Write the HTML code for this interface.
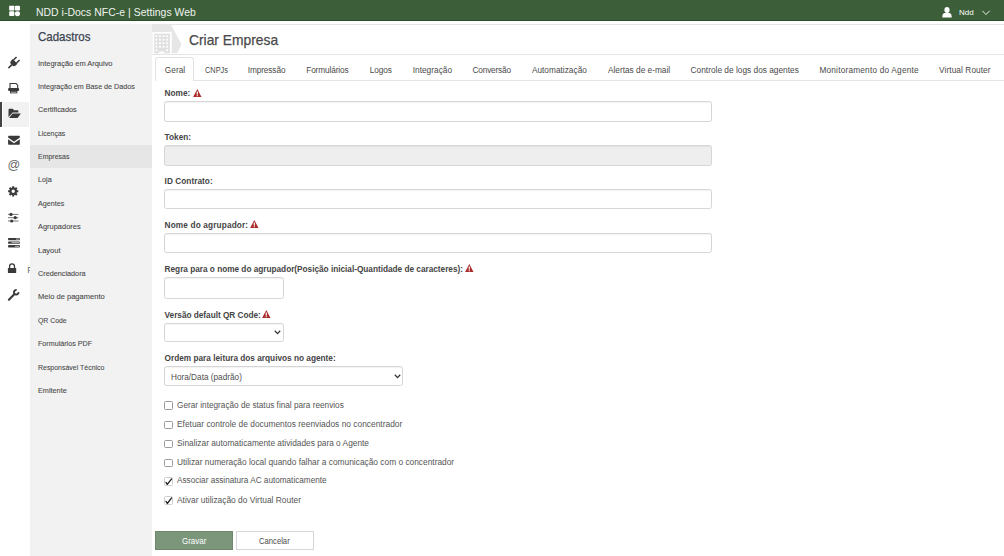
<!DOCTYPE html>
<html><head><meta charset="utf-8">
<style>
*{box-sizing:border-box;margin:0;padding:0}
html,body{width:1004px;height:556px;overflow:hidden;background:#fff;font-family:"Liberation Sans",sans-serif;color:#444}
.a{position:absolute;white-space:nowrap;line-height:1}
#top{position:absolute;left:0;top:0;width:1004px;height:21px;background:#3c5f39;border-bottom:1px solid #2b4d2a}
#ttl{left:36px;top:7.8px;font-size:10.4px;color:#f0f4f0}
#icol{position:absolute;left:0;top:21px;width:29.5px;height:535px;background:#fff}
#side{position:absolute;left:29.5px;top:24px;width:122.6px;height:532px;background:#f2f2f2}
.si{left:38px;font-size:8.1px;color:#484848;transform-origin:0 0;-webkit-text-stroke:0.1px #484848}
#act{position:absolute;left:29.5px;top:144.8px;width:122.6px;height:23.1px;background:#e6e6e6}
#cad{left:38px;top:31px;font-size:12.2px;color:#3b4450;-webkit-text-stroke:0.25px #3b4450;transform:scaleX(0.9446);transform-origin:0 0}
.hl{position:absolute;background:#e5e5e5;height:1px}
#crt{left:188.8px;top:32.6px;font-size:14.4px;color:#4a4a4a;-webkit-text-stroke:0.25px #4a4a4a;transform:scaleX(0.9602);transform-origin:0 0}
.tab{top:66.4px;font-size:8.3px;color:#4a4a4a}
.lb{left:164.6px;font-size:8.25px;font-weight:bold;color:#444}
.inp{position:absolute;left:164px;width:547.8px;height:20.5px;border:1px solid #d6d6d6;border-radius:2.5px;background:#fff;box-shadow:inset 0 1px 1px rgba(0,0,0,.05)}
.cb{position:absolute;left:164.2px;width:8.8px;height:8.8px;border:1.1px solid #9a9a9a;border-radius:1.5px;background:#fff}
.cbl{left:176.7px;font-size:8.9px;color:#555;transform-origin:0 0}
.btn{position:absolute;top:530.6px;height:19.5px;font-size:7.9px;text-align:center;line-height:19.5px}
</style></head><body>
<div id="top"></div>
<svg class="a" style="left:8px;top:5px" width="14" height="13" viewBox="0 0 14 13"><g fill="#fff"><rect x="1.2" y="0.7" width="5.1" height="4.7" rx="0.5"/><rect x="6.9" y="0.7" width="5.1" height="4.7" rx="1"/><rect x="1.2" y="6.3" width="5.1" height="4.8" rx="1.2"/><ellipse cx="9.45" cy="8.7" rx="2.6" ry="2.45"/></g></svg>
<div style="letter-spacing:0.05px" id="ttl" class="a">NDD i-Docs NFC-e | Settings Web</div>
<svg class="a" style="left:942px;top:6.5px" width="10" height="11" viewBox="0 0 10 11"><g fill="#fff"><ellipse cx="5" cy="3" rx="2.6" ry="3"/><path d="M0.3 10.5 C0.3 7 1.5 6 3 6 L7 6 C8.5 6 9.7 7 9.7 10.5 Z"/></g></svg>
<div class="a" style="left:959px;top:8.5px;font-size:8px;color:#fff">Ndd</div>
<svg class="a" style="left:981.8px;top:10.3px" width="9" height="6" viewBox="0 0 9 6"><path d="M0.3 0.8 L4 4.5 L7.7 0.8" stroke="#fff" stroke-width="0.9" fill="none"/></svg>

<div id="icol"></div>
<div class="a" style="left:27.2px;top:265.6px;font-size:8.4px;color:#666">F</div>
<div id="side"></div>
<div style="position:absolute;left:3px;top:101.6px;width:25.5px;height:25.2px;background:#f2f2f2"></div>
<div style="position:absolute;left:0;top:101.6px;width:2px;height:25.2px;background:#444"></div>
<svg class="a" style="left:0;top:0" width="30" height="320" viewBox="0 0 30 320">
<g fill="#3a3a3a" stroke="none">
<!-- plug -->
<g transform="translate(13.9,62.6) rotate(45)"><path d="M-3.3 -1.7 H3.3 V0.4 A2.8 2.8 0 0 1 0.5 3.2 H-0.5 A2.8 2.8 0 0 1 -3.3 0.4 Z"/><rect x="-2.9" y="-5.9" width="1.5" height="4.4"/><rect x="1.4" y="-5.9" width="1.5" height="4.4"/><rect x="-0.8" y="2.8" width="1.6" height="5" rx="0.7"/></g>
<!-- printer -->
<path d="M10 88.3 V83.5 H16 L17.7 85.2 V88.3" fill="none" stroke="#3a3a3a" stroke-width="1.1"/>
<rect x="8.1" y="88" width="11" height="3" rx="1.1"/>
<rect x="10.5" y="91.4" width="6.4" height="1.5" fill="#fff" stroke="#3a3a3a" stroke-width="0.9"/>
<!-- folder open -->
<path d="M8.5 117.3 V109.8 Q8.5 108.8 9.5 108.8 H12.8 L14 110.3 H17.6 Q18.4 110.3 18.4 111.2 V112.6 H12.6 Z"/>
<path d="M9.2 118.1 L12.6 113.4 H20.9 L17.6 118.1 Z"/>
<!-- envelope -->
<path d="M8.1 136.6 Q8.1 135.8 8.9 135.8 H19 Q19.8 135.8 19.8 136.6 V137.6 L14 141.8 L8.1 137.6 Z"/>
<path d="M8.1 139.2 L14 143.3 L19.8 139.2 V143.9 Q19.8 144.7 19 144.7 H8.9 Q8.1 144.7 8.1 143.9 Z"/>
<!-- gear -->
<path fill-rule="evenodd" d="M18.30 190.27 L18.30 192.33 L16.96 192.35 L16.60 193.21 L17.53 194.17 L16.07 195.63 L15.11 194.70 L14.25 195.06 L14.23 196.40 L12.17 196.40 L12.15 195.06 L11.29 194.70 L10.33 195.63 L8.87 194.17 L9.80 193.21 L9.44 192.35 L8.10 192.33 L8.10 190.27 L9.44 190.25 L9.80 189.39 L8.87 188.43 L10.33 186.97 L11.29 187.90 L12.15 187.54 L12.17 186.20 L14.23 186.20 L14.25 187.54 L15.11 187.90 L16.07 186.97 L17.53 188.43 L16.60 189.39 L16.96 190.25 Z M14.9 191.3 A1.7 1.7 0 1 0 11.5 191.3 A1.7 1.7 0 1 0 14.9 191.3 Z"/>
<!-- sliders -->
<g stroke="#666" stroke-width="0.9"><path d="M8 214.4 H18.4 M8 217.7 H18.4 M8 221 H18.4"/></g>
<circle cx="11" cy="214.4" r="1.6"/><circle cx="15.2" cy="217.7" r="1.6"/><circle cx="11.7" cy="221" r="1.6"/>
<!-- server bars -->
<rect x="8.1" y="237.9" width="11.7" height="2.3" rx="0.4"/>
<rect x="8.1" y="241.5" width="11.7" height="2.3" rx="0.4"/>
<rect x="8.1" y="245.1" width="11.7" height="2.3" rx="0.4"/>
<g fill="#c8c8c8"><rect x="16" y="238.6" width="3" height="0.9"/><rect x="11.6" y="242.2" width="7.4" height="0.9"/><rect x="15" y="245.8" width="4" height="0.9"/></g>
<!-- lock -->
<path d="M9.6 268.3 V266.4 A2.45 2.45 0 0 1 14.5 266.4 V268.3" fill="none" stroke="#3a3a3a" stroke-width="1.3"/>
<rect x="7.9" y="268" width="8.3" height="5" rx="0.6"/>
<!-- wrench -->
<path d="M8.9 299.7 L14.3 294.3" stroke="#3a3a3a" stroke-width="2.1" stroke-linecap="round"/>
<path d="M18.5 292.1 A2.3 2.3 0 1 1 16.6 290" fill="none" stroke="#3a3a3a" stroke-width="1.9"/>
</g>
</svg>
<div class="a" style="left:7.6px;top:158.6px;font-size:12.5px;color:#666">@</div>

<div id="act"></div>
<div id="cad" class="a">Cadastros</div>
<div style="top:59.50px;transform:scaleX(0.9198)" class="a si">Integração em Arquivo</div>
<div style="top:82.89px;transform:scaleX(0.8853)" class="a si">Integração em Base de Dados</div>
<div style="top:106.28px;transform:scaleX(0.907)" class="a si">Certificados</div>
<div style="top:129.67px;transform:scaleX(0.85)" class="a si">Licenças</div>
<div style="top:153.06px;transform:scaleX(0.8611)" class="a si">Empresas</div>
<div style="top:176.45px;transform:scaleX(0.8933)" class="a si">Loja</div>
<div style="top:199.84px;transform:scaleX(0.8833)" class="a si">Agentes</div>
<div style="top:223.23px;transform:scaleX(0.9196)" class="a si">Agrupadores</div>
<div style="top:246.62px;transform:scaleX(0.925)" class="a si">Layout</div>
<div style="top:270.01px;transform:scaleX(0.8962)" class="a si">Credenciadora</div>
<div style="top:293.40px;transform:scaleX(0.9324)" class="a si">Meio de pagamento</div>
<div style="top:316.79px;transform:scaleX(0.8471)" class="a si">QR Code</div>
<div style="top:340.18px;transform:scaleX(0.8836)" class="a si">Formulários PDF</div>
<div style="top:363.57px;transform:scaleX(0.8597)" class="a si">Responsável Técnico</div>
<div style="top:386.96px;transform:scaleX(0.9)" class="a si">Emitente</div>

<!-- header -->
<div class="hl" style="left:152px;top:24px;width:852px"></div>
<div class="hl" style="left:152px;top:53.6px;width:852px"></div>
<svg class="a" style="left:152.3px;top:24.3px" width="31" height="30" viewBox="0 0 31 30"><path d="M0 0 L18.7 0 L29.5 20.5 L25.2 29.2 L0 29.2 Z" fill="#e6e6e6"/>
<rect x="0.4" y="7.9" width="19.3" height="21.3" fill="#fff"/>
<rect x="2.2" y="9.7" width="15.7" height="19.5" fill="#e0e0e0"/>
<g fill="#fff"><rect x="3.5" y="11.2" width="1.9" height="1.9"/><rect x="7" y="11.2" width="1.9" height="1.9"/><rect x="10.6" y="11.2" width="1.9" height="1.9"/><rect x="14.2" y="11.2" width="1.9" height="1.9"/>
<rect x="3.5" y="14.7" width="1.9" height="1.9"/><rect x="7" y="14.7" width="1.9" height="1.9"/><rect x="10.6" y="14.7" width="1.9" height="1.9"/><rect x="14.2" y="14.7" width="1.9" height="1.9"/>
<rect x="3.5" y="18.3" width="1.9" height="1.9"/><rect x="7" y="18.3" width="1.9" height="1.9"/><rect x="10.6" y="18.3" width="1.9" height="1.9"/><rect x="14.2" y="18.3" width="1.9" height="1.9"/>
<rect x="3.5" y="21.8" width="1.9" height="1.9"/><rect x="7" y="21.8" width="1.9" height="1.9"/><rect x="10.6" y="21.8" width="1.9" height="1.9"/><rect x="14.2" y="21.8" width="1.9" height="1.9"/>
<rect x="3.5" y="25.3" width="1.9" height="1.9"/><rect x="14.2" y="25.3" width="1.9" height="1.9"/><rect x="7" y="27.5" width="5.5" height="1.7"/></g></svg>
<div id="crt" class="a">Criar Empresa</div>

<!-- tabs -->
<div class="hl" style="left:155px;top:80px;width:849px"></div>
<div style="position:absolute;left:155.2px;top:57px;width:38.6px;height:24px;border:1px solid #e3e3e3;border-bottom:none;border-radius:3px 3px 0 0;background:#fff"></div>
<div style="left:164.8px;letter-spacing:0.025px" class="a tab">Geral</div>
<div style="left:204.7px;transform:scaleX(0.89);transform-origin:0 0" class="a tab">CNPJs</div>
<div style="left:247.7px;letter-spacing:-0.112px" class="a tab">Impressão</div>
<div style="left:306.2px;letter-spacing:-0.13px" class="a tab">Formulários</div>
<div style="left:369.7px;letter-spacing:-0.075px" class="a tab">Logos</div>
<div style="left:412.7px;letter-spacing:0.022px" class="a tab">Integração</div>
<div style="left:472.5px;letter-spacing:-0.188px" class="a tab">Conversão</div>
<div style="left:531.9px;letter-spacing:0.008px" class="a tab">Automatização</div>
<div style="left:607.9px;letter-spacing:0.0px" class="a tab">Alertas de e-mail</div>
<div style="left:690.6px;letter-spacing:0.011px" class="a tab">Controle de logs dos agentes</div>
<div style="left:819.4px;letter-spacing:0.191px" class="a tab">Monitoramento do Agente</div>
<div style="left:939.1px;letter-spacing:0.069px" class="a tab">Virtual Router</div>

<!-- form -->
<div class="a lb" style="top:90.2px">Nome:</div>
<div class="inp" style="top:101.1px"></div>
<div class="a lb" style="top:133.7px">Token:</div>
<div class="inp" style="top:145.1px;background:#eee"></div>
<div style="top:178.3px;letter-spacing:0.036px" class="a lb">ID Contrato:</div>
<div class="inp" style="top:188.9px"></div>
<div style="top:222.3px;letter-spacing:0.141px" class="a lb">Nome do agrupador:</div>
<div class="inp" style="top:232.9px"></div>
<div style="top:266.0px;letter-spacing:-0.014px" class="a lb">Regra para o nome do agrupador(Posição inicial-Quantidade de caracteres):</div>
<div class="inp" style="top:276.8px;width:119.7px;height:22.7px"></div>
<div style="top:311.5px;letter-spacing:-0.023px" class="a lb">Versão default QR Code:</div>
<div class="inp" style="top:322.8px;width:119.7px;height:19.6px"></div>
<div style="top:355.0px;letter-spacing:0.002px" class="a lb">Ordem para leitura dos arquivos no agente:</div>
<div class="inp" style="top:366.1px;width:238.9px;height:19.8px"></div>
<div style="left:171px;top:372.9px;font-size:8.7px;color:#505050;transform:scaleX(0.947);transform-origin:0 0" class="a">Hora/Data (padrão)</div>
<svg class="a" style="left:274.3px;top:330.1px" width="7" height="5" viewBox="0 0 7 5"><path d="M0.8 0.8 L3.5 3.6 L6.2 0.8" stroke="#333" stroke-width="1.3" fill="none"/></svg>
<svg class="a" style="left:393.5px;top:373.5px" width="7" height="5" viewBox="0 0 7 5"><path d="M0.8 0.8 L3.5 3.6 L6.2 0.8" stroke="#333" stroke-width="1.3" fill="none"/></svg>

<!-- warnings -->
<svg class="a" style="left:193px;top:88.8px" width="9" height="8" viewBox="0 0 9 8"><path d="M4.3 0.1 L8.5 7.9 L0.1 7.9 Z" fill="#ab2d2a"/><rect x="3.7" y="2.5" width="1.2" height="3.1" fill="#fff"/><rect x="3.7" y="6.2" width="1.2" height="1" fill="#fff"/></svg>
<svg class="a" style="left:249.6px;top:220.2px" width="9" height="8" viewBox="0 0 9 8"><path d="M4.3 0.1 L8.5 7.9 L0.1 7.9 Z" fill="#ab2d2a"/><rect x="3.7" y="2.5" width="1.2" height="3.1" fill="#fff"/><rect x="3.7" y="6.2" width="1.2" height="1" fill="#fff"/></svg>
<svg class="a" style="left:465.2px;top:263.9px" width="9" height="8" viewBox="0 0 9 8"><path d="M4.3 0.1 L8.5 7.9 L0.1 7.9 Z" fill="#ab2d2a"/><rect x="3.7" y="2.5" width="1.2" height="3.1" fill="#fff"/><rect x="3.7" y="6.2" width="1.2" height="1" fill="#fff"/></svg>
<svg class="a" style="left:262.3px;top:310.1px" width="9" height="8" viewBox="0 0 9 8"><path d="M4.3 0.1 L8.5 7.9 L0.1 7.9 Z" fill="#ab2d2a"/><rect x="3.7" y="2.5" width="1.2" height="3.1" fill="#fff"/><rect x="3.7" y="6.2" width="1.2" height="1" fill="#fff"/></svg>

<!-- checkboxes -->
<div class="cb" style="top:401.3px"></div><div style="top:400.9px;transform:scaleX(0.9261)" class="a cbl">Gerar integração de status final para reenvios</div>
<div class="cb" style="top:420.5px"></div><div style="top:420.1px;transform:scaleX(0.9454)" class="a cbl">Efetuar controle de documentos reenviados no concentrador</div>
<div class="cb" style="top:439.6px"></div><div style="top:439.2px;transform:scaleX(0.9376)" class="a cbl">Sinalizar automaticamente atividades para o Agente</div>
<div class="cb" style="top:458.7px"></div><div style="top:458.3px;transform:scaleX(0.941)" class="a cbl">Utilizar numeração local quando falhar a comunicação com o concentrador</div>
<div class="cb" style="top:477.2px;border-color:#d0d0d0"></div><div style="top:476.4px;transform:scaleX(0.9216)" class="a cbl">Associar assinatura AC automaticamente</div>
<div class="cb" style="top:496.3px;border-color:#d0d0d0"></div><div style="top:495.5px;transform:scaleX(0.9458)" class="a cbl">Ativar utilização do Virtual Router</div>

<svg class="a" style="left:164px;top:477px" width="10" height="30" viewBox="0 0 10 30"><g fill="none" stroke="#1e1e1e" stroke-width="1.25" stroke-linecap="round" stroke-linejoin="round"><path d="M2 5.3 L3.3 7.4 L7.6 1.8"/><path d="M2 24.4 L3.3 26.5 L7.6 20.9"/></g></svg>
<div class="btn" style="left:155.2px;top:530.5px;width:77.8px;height:19.5px;background:#7c967c;border:1px solid #6e886e"></div>
<div class="btn" style="left:235.7px;width:77.9px;background:#fff;border:1px solid #d6d6d6"></div>
<div class="a" style="left:182.3px;top:537px;font-size:8.9px;transform:scaleX(0.9);transform-origin:0 0;color:#fff">Gravar</div>
<div class="a" style="left:259px;top:537px;font-size:8.9px;transform:scaleX(0.864);transform-origin:0 0;color:#4a4a4a">Cancelar</div>
</body></html>
